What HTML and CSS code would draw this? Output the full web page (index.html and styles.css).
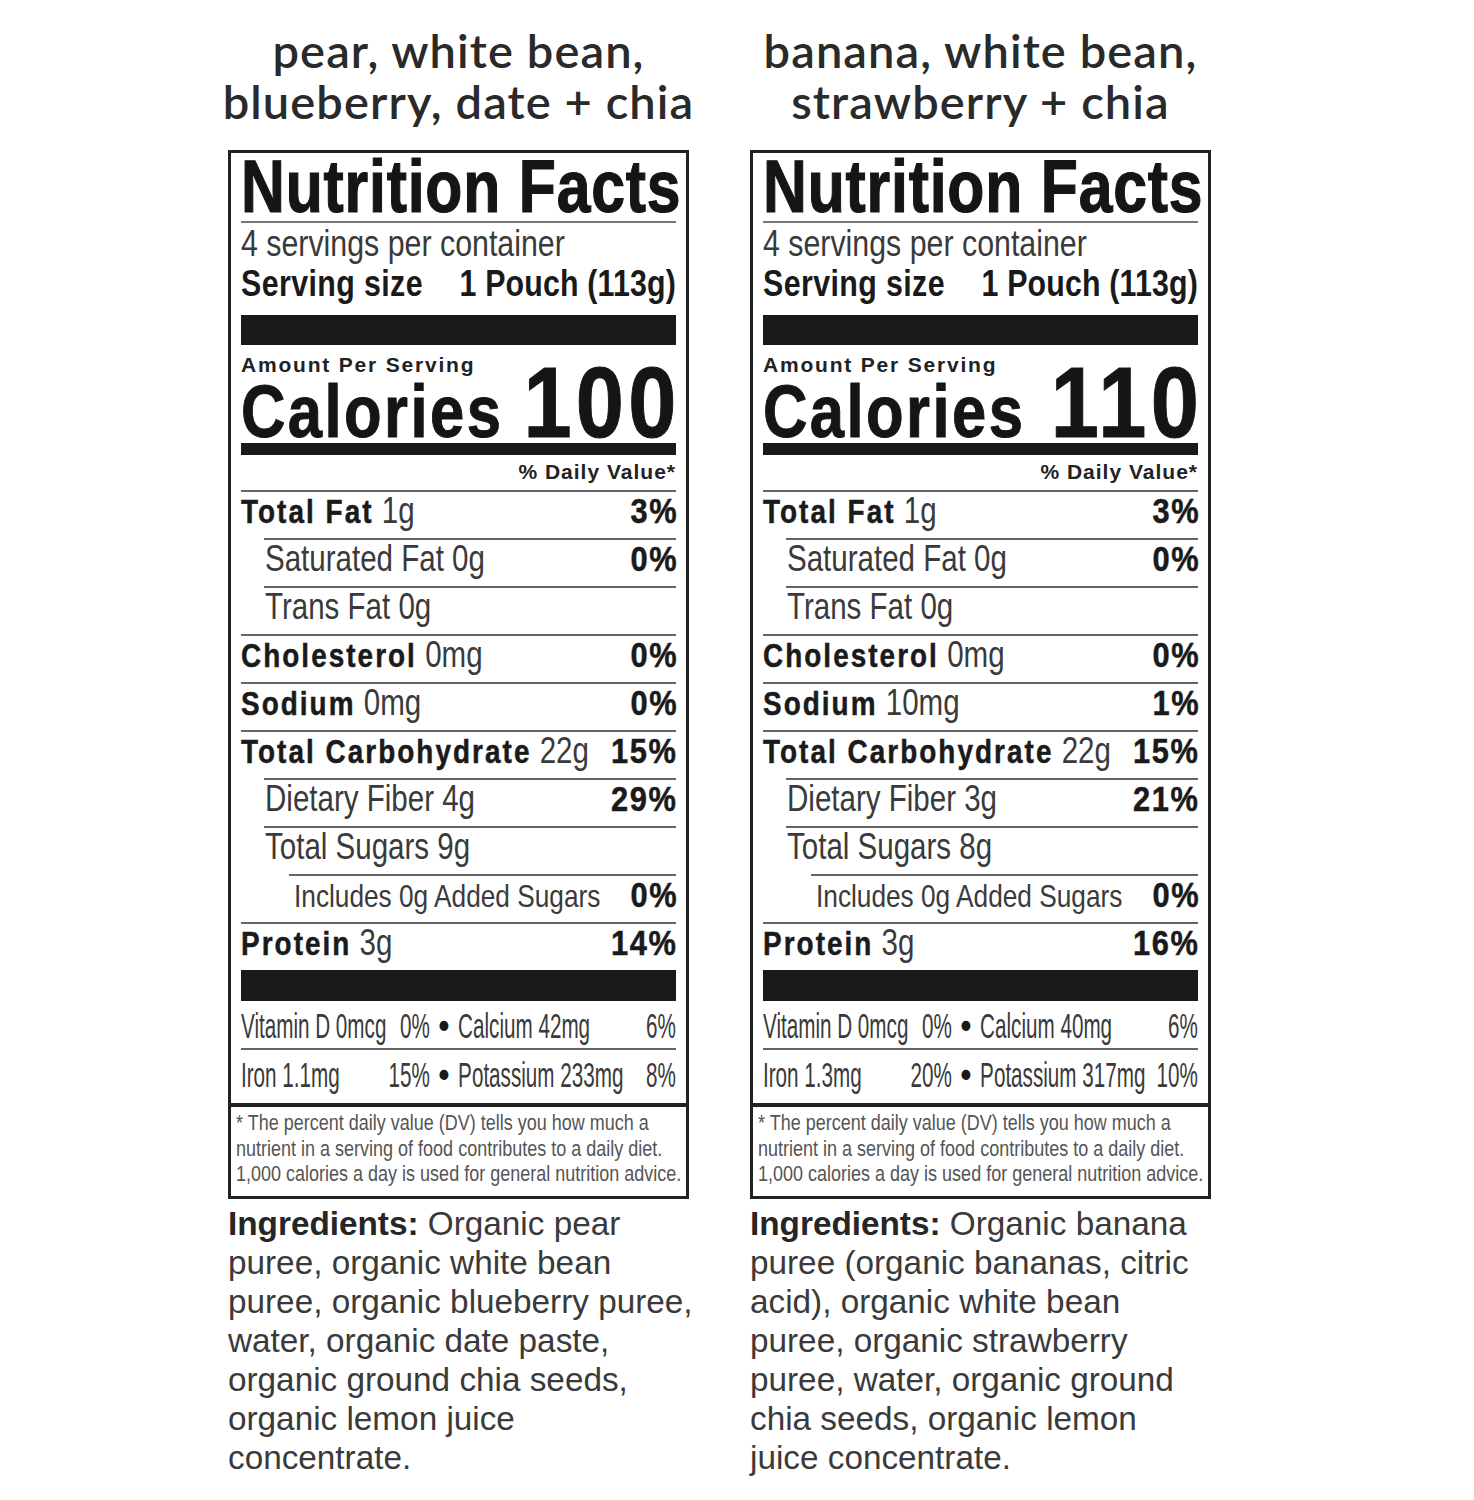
FILE: index.html
```html
<!DOCTYPE html>
<html lang="en">
<head>
<meta charset="utf-8">
<title>Nutrition Facts</title>
<link rel="stylesheet" href="styles.css">
</head>
<body>
<main class="page">
  <section class="product">
    <h2 class="flavor"><span>pear, white bean,</span><span>blueberry, date + chia</span></h2>
    <div class="label">
      <div class="label-main">
        <h1 class="title"><span class="title-text">Nutrition Facts</span></h1>
        <div class="servings"><span class="servings-text">4 servings per container</span></div>
        <div class="serving-size"><span class="ss-l">Serving size</span><span class="ss-r">1 Pouch (113g)</span></div>
        <div class="bar bar-thick"></div>
        <div class="amount">Amount Per Serving</div>
        <div class="calories"><span class="cal-label">Calories</span><span class="cal-num">100</span></div>
        <div class="bar bar-med"></div>
        <div class="dv">% Daily Value*</div>
        <div class="rows">
          <div class="row"><span class="name"><b>Total Fat</b> 1g</span><span class="pct">3%</span></div>
          <div class="row sub"><span class="name">Saturated Fat 0g</span><span class="pct">0%</span></div>
          <div class="row sub"><span class="name">Trans Fat 0g</span></div>
          <div class="row"><span class="name"><b>Cholesterol</b> 0mg</span><span class="pct">0%</span></div>
          <div class="row"><span class="name"><b>Sodium</b> 0mg</span><span class="pct">0%</span></div>
          <div class="row"><span class="name"><b>Total Carbohydrate</b> 22g</span><span class="pct">15%</span></div>
          <div class="row sub"><span class="name">Dietary Fiber 4g</span><span class="pct">29%</span></div>
          <div class="row sub"><span class="name">Total Sugars 9g</span></div>
          <div class="row subsub"><span class="name">Includes 0g Added Sugars</span><span class="pct">0%</span></div>
          <div class="row"><span class="name"><b>Protein</b> 3g</span><span class="pct">14%</span></div>
        </div>
        <div class="bar bar-bottom"></div>
        <div class="vit">
          <div class="vit-inner"><span class="vit-pair"><span>Vitamin D 0mcg</span><span>0%</span></span><span class="dot">•</span><span>Calcium 42mg</span><span>6%</span></div>
        </div>
        <div class="vit second">
          <div class="vit-inner"><span class="vit-pair"><span>Iron 1.1mg</span><span>15%</span></span><span class="dot">•</span><span>Potassium 233mg</span><span>8%</span></div>
        </div>
      </div>
      <p class="footnote"><span class="fn-text">* The percent daily value (DV) tells you how much a<br>nutrient in a serving of food contributes to a daily diet.<br>1,000 calories a day is used for general nutrition advice.</span></p>
    </div>
    <p class="ingredients"><b>Ingredients:</b> Organic pear<br>puree, organic white bean<br>puree, organic blueberry puree,<br>water, organic date paste,<br>organic ground chia seeds,<br>organic lemon juice<br>concentrate.</p>
  </section>

  <section class="product">
    <h2 class="flavor"><span>banana, white bean,</span><span>strawberry + chia</span></h2>
    <div class="label">
      <div class="label-main">
        <h1 class="title"><span class="title-text">Nutrition Facts</span></h1>
        <div class="servings"><span class="servings-text">4 servings per container</span></div>
        <div class="serving-size"><span class="ss-l">Serving size</span><span class="ss-r">1 Pouch (113g)</span></div>
        <div class="bar bar-thick"></div>
        <div class="amount">Amount Per Serving</div>
        <div class="calories"><span class="cal-label">Calories</span><span class="cal-num">110</span></div>
        <div class="bar bar-med"></div>
        <div class="dv">% Daily Value*</div>
        <div class="rows">
          <div class="row"><span class="name"><b>Total Fat</b> 1g</span><span class="pct">3%</span></div>
          <div class="row sub"><span class="name">Saturated Fat 0g</span><span class="pct">0%</span></div>
          <div class="row sub"><span class="name">Trans Fat 0g</span></div>
          <div class="row"><span class="name"><b>Cholesterol</b> 0mg</span><span class="pct">0%</span></div>
          <div class="row"><span class="name"><b>Sodium</b> 10mg</span><span class="pct">1%</span></div>
          <div class="row"><span class="name"><b>Total Carbohydrate</b> 22g</span><span class="pct">15%</span></div>
          <div class="row sub"><span class="name">Dietary Fiber 3g</span><span class="pct">21%</span></div>
          <div class="row sub"><span class="name">Total Sugars 8g</span></div>
          <div class="row subsub"><span class="name">Includes 0g Added Sugars</span><span class="pct">0%</span></div>
          <div class="row"><span class="name"><b>Protein</b> 3g</span><span class="pct">16%</span></div>
        </div>
        <div class="bar bar-bottom"></div>
        <div class="vit">
          <div class="vit-inner"><span class="vit-pair"><span>Vitamin D 0mcg</span><span>0%</span></span><span class="dot">•</span><span>Calcium 40mg</span><span>6%</span></div>
        </div>
        <div class="vit second">
          <div class="vit-inner"><span class="vit-pair"><span>Iron 1.3mg</span><span>20%</span></span><span class="dot">•</span><span>Potassium 317mg</span><span>10%</span></div>
        </div>
      </div>
      <p class="footnote"><span class="fn-text">* The percent daily value (DV) tells you how much a<br>nutrient in a serving of food contributes to a daily diet.<br>1,000 calories a day is used for general nutrition advice.</span></p>
    </div>
    <p class="ingredients"><b>Ingredients:</b> Organic banana<br>puree (organic bananas, citric<br>acid), organic white bean<br>puree, organic strawberry<br>puree, water, organic ground<br>chia seeds, organic lemon<br>juice concentrate.</p>
  </section>
</main>
</body>
</html>
```

FILE: styles.css
```css
html, body {
  margin: 0;
  padding: 0;
  background: #ffffff;
}

.page {
  display: flex;
  gap: 61px;
  padding-left: 228px;
  font-family: "Liberation Sans", Arial, sans-serif;
  color: #1c1c1c;
}

.product {
  width: 461px;
  display: flex;
  flex-direction: column;
}

.flavor {
  margin: 25px 0 23px;
  display: flex;
  flex-direction: column;
  align-items: center;
  font-family: Lato, "Open Sans", sans-serif;
  font-weight: 600;
  font-size: 47px;
  line-height: 51px;
  letter-spacing: 1.1px;
  color: #2a2a2a;
  white-space: nowrap;
}

.label {
  border: 3px solid #222;
  width: 461px;
  box-sizing: border-box;
}

.label-main {
  padding: 0 10px;
}

/* condensed text: glyphs narrowed horizontally */
.title-text,
.servings-text,
.ss-l,
.cal-label,
.name,
.fn-text {
  display: inline-block;
  white-space: nowrap;
  transform: scaleX(0.82);
  transform-origin: 0 50%;
}

.ss-r,
.cal-num,
.pct {
  display: inline-block;
  white-space: nowrap;
  transform: scaleX(0.82);
  transform-origin: 100% 50%;
}

.title {
  margin: 0;
  padding-top: 1px;
  height: 67px;
  font-size: 74px;
  line-height: 66px;
  font-weight: 700;
  white-space: nowrap;
  color: #151515;
  border-bottom: 2px solid #777;
}

.title-text {
  letter-spacing: 1px;
  -webkit-text-stroke: 1.2px #151515;
}

.servings {
  padding-top: 1px;
  height: 40px;
  font-size: 37px;
  line-height: 40px;
  font-weight: 400;
  color: #3a3a3a;
}

.serving-size {
  display: flex;
  justify-content: space-between;
  font-size: 37px;
  line-height: 40px;
  font-weight: 700;
  color: #1a1a1a;
}

.ss-l {
  min-width: 0;
  flex: 0 1 auto;
  letter-spacing: 0.5px;
}

.ss-r {
  flex: none;
  letter-spacing: 0.2px;
}

.bar {
  background: #1a1a1a;
}

.bar-thick {
  margin-top: 11px;
  height: 30px;
}

.amount {
  margin-top: 9px;
  font-size: 21px;
  line-height: 22px;
  font-weight: 700;
  letter-spacing: 1.8px;
  white-space: nowrap;
  color: #222;
}

.calories {
  display: flex;
  justify-content: space-between;
  align-items: baseline;
  height: 61px;
  font-weight: 700;
  color: #151515;
}

.cal-label {
  min-width: 0;
  flex: 0 1 auto;
  font-size: 75px;
  line-height: 53px;
  letter-spacing: 3px;
  -webkit-text-stroke: 1px #151515;
}

.cal-num {
  flex: none;
  font-size: 100px;
  line-height: 53px;
  letter-spacing: 4.9px;
  margin-right: -4.9px;
  transform: scaleX(0.865);
  -webkit-text-stroke: 1px #151515;
}

.bar-med {
  margin-top: 6px;
  height: 12px;
}

.dv {
  margin-top: 5px;
  text-align: right;
  font-size: 21px;
  line-height: 24px;
  font-weight: 700;
  letter-spacing: 1px;
  color: #222;
}

.rows {
  margin-top: 6px;
}

.row {
  display: flex;
  justify-content: space-between;
  align-items: baseline;
  height: 46px;
  border-top: 2px solid #666;
  line-height: 37px;
  font-size: 36px;
}

.row.sub {
  margin-left: 23px;
  padding-left: 1px;
}

.row.subsub {
  margin-left: 48px;
  padding-left: 5px;
  font-size: 32px;
}

.name {
  min-width: 0;
  flex: 0 1 auto;
  color: #3a3a3a;
  font-weight: 400;
}

.name b {
  font-size: 34px;
  font-weight: 700;
  letter-spacing: 2.5px;
  color: #1a1a1a;
  -webkit-text-stroke: 0.5px #1a1a1a;
}

.pct {
  flex: none;
  font-size: 35px;
  font-weight: 700;
  letter-spacing: 1.8px;
  margin-right: -1.8px;
  color: #1a1a1a;
  transform: scaleX(0.88);
  -webkit-text-stroke: 0.5px #1a1a1a;
}

.bar-bottom {
  height: 31px;
}

.vit {
  height: 46px;
  padding-top: 1px;
}

.vit.second {
  height: 52px;
  border-top: 2px solid #666;
}

.vit-inner {
  width: 737px;
  display: grid;
  grid-template-columns: 320px 48px 1fr auto;
  font-size: 35px;
  line-height: 47px;
  color: #3a3a3a;
  white-space: nowrap;
  transform: scaleX(0.59);
  transform-origin: 0 0;
}

.vit-pair {
  display: flex;
  justify-content: space-between;
}

.dot {
  text-align: center;
  color: #1a1a1a;
  font-weight: 700;
  transform: scaleX(1.5);
}

.footnote {
  margin: 0;
  padding: 3px 4px 9px 5px;
  border-top: 4px solid #222;
  font-size: 22.5px;
  line-height: 25.5px;
  color: #555;
  white-space: nowrap;
}

.fn-text {
  display: block;
  transform: scaleX(0.8);
}

.ingredients {
  margin: 5px 0 0;
  font-size: 33.3px;
  line-height: 39px;
  color: #3a3a3a;
  white-space: nowrap;
}

.ingredients b {
  color: #262626;
}
```
